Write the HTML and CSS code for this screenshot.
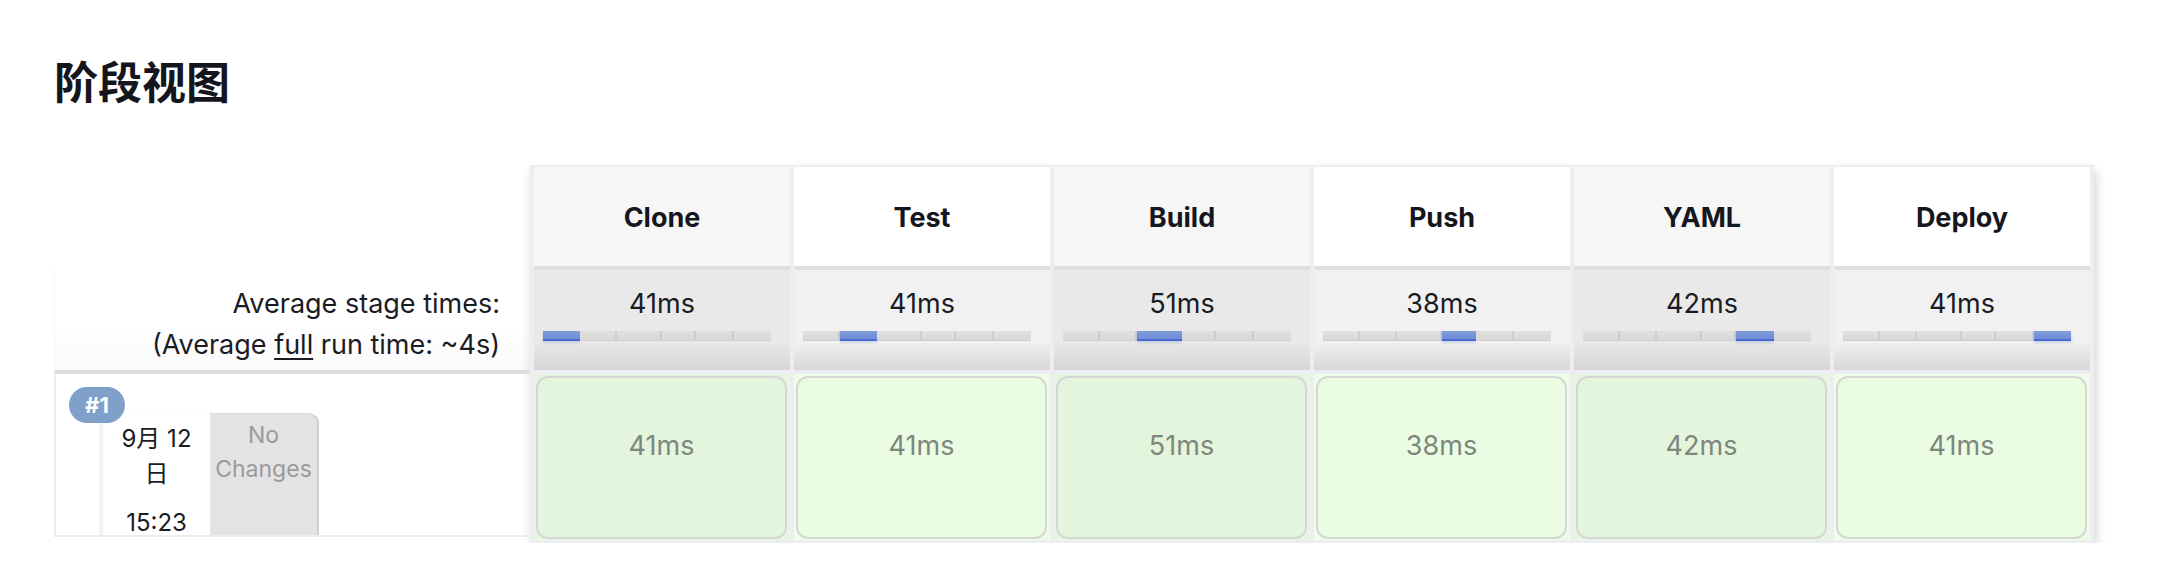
FILE: index.html
```html
<!DOCTYPE html>
<html lang="zh-CN">
<head>
<meta charset="utf-8">
<title>阶段视图</title>
<link rel="stylesheet" href="styles.css">
</head>
<body>
<main class="page">
  <h1 class="title">阶段视图</h1>
  <div class="stage-view">
    <div class="legend">
      <div class="legend-spacer"></div>
      <div class="legend-avg">
        <div>Average stage times:</div>
        <div>(Average <u>full</u> run time: ~4s)</div>
      </div>
      <div class="build-row">
        <span class="badge">#1</span>
        <div class="build-info">
          <div class="date-cell">
            <div class="date">9月 12 日</div>
            <div class="time">15:23</div>
          </div>
          <div class="changes">No Changes</div>
        </div>
      </div>
    </div>

    <div class="stages">
      <div class="stage odd">
        <div class="stage-head">Clone</div>
        <div class="stage-avg">
          <div class="avg-time">41ms</div>
          <div class="track">
            <span class="seg active" style="width:16.14%"></span><span class="seg" style="width:16.14%"></span><span class="seg" style="width:20.08%"></span><span class="seg" style="width:14.96%"></span><span class="seg" style="width:16.54%"></span><span class="seg" style="width:16.14%"></span>
          </div>
        </div>
        <div class="stage-cell"><div class="cell-box">41ms</div></div>
      </div>

      <div class="stage even">
        <div class="stage-head">Test</div>
        <div class="stage-avg">
          <div class="avg-time">41ms</div>
          <div class="track">
            <span class="seg" style="width:16.14%"></span><span class="seg active" style="width:16.14%"></span><span class="seg" style="width:20.08%"></span><span class="seg" style="width:14.96%"></span><span class="seg" style="width:16.54%"></span><span class="seg" style="width:16.14%"></span>
          </div>
        </div>
        <div class="stage-cell"><div class="cell-box">41ms</div></div>
      </div>

      <div class="stage odd">
        <div class="stage-head">Build</div>
        <div class="stage-avg">
          <div class="avg-time">51ms</div>
          <div class="track">
            <span class="seg" style="width:16.14%"></span><span class="seg" style="width:16.14%"></span><span class="seg active" style="width:20.08%"></span><span class="seg" style="width:14.96%"></span><span class="seg" style="width:16.54%"></span><span class="seg" style="width:16.14%"></span>
          </div>
        </div>
        <div class="stage-cell"><div class="cell-box">51ms</div></div>
      </div>

      <div class="stage even">
        <div class="stage-head">Push</div>
        <div class="stage-avg">
          <div class="avg-time">38ms</div>
          <div class="track">
            <span class="seg" style="width:16.14%"></span><span class="seg" style="width:16.14%"></span><span class="seg" style="width:20.08%"></span><span class="seg active" style="width:14.96%"></span><span class="seg" style="width:16.54%"></span><span class="seg" style="width:16.14%"></span>
          </div>
        </div>
        <div class="stage-cell"><div class="cell-box">38ms</div></div>
      </div>

      <div class="stage odd">
        <div class="stage-head">YAML</div>
        <div class="stage-avg">
          <div class="avg-time">42ms</div>
          <div class="track">
            <span class="seg" style="width:16.14%"></span><span class="seg" style="width:16.14%"></span><span class="seg" style="width:20.08%"></span><span class="seg" style="width:14.96%"></span><span class="seg active" style="width:16.54%"></span><span class="seg" style="width:16.14%"></span>
          </div>
        </div>
        <div class="stage-cell"><div class="cell-box">42ms</div></div>
      </div>

      <div class="stage even">
        <div class="stage-head">Deploy</div>
        <div class="stage-avg">
          <div class="avg-time">41ms</div>
          <div class="track">
            <span class="seg" style="width:16.14%"></span><span class="seg" style="width:16.14%"></span><span class="seg" style="width:20.08%"></span><span class="seg" style="width:14.96%"></span><span class="seg" style="width:16.54%"></span><span class="seg active" style="width:16.14%"></span>
          </div>
        </div>
        <div class="stage-cell"><div class="cell-box">41ms</div></div>
      </div>
    </div>
  </div>
</main>
</body>
</html>
```

FILE: styles.css
```css
* { box-sizing: border-box; }

html, body {
  margin: 0;
  padding: 0;
  background: #ffffff;
}

body {
  font-family: "Inter", "Noto Sans CJK SC", sans-serif;
  color: #1b1b23;
}

.page {
  padding: 58px 0 0 54px;
}

.title {
  margin: 0 0 63px;
  font-family: "Noto Sans CJK SC", sans-serif;
  font-size: 44px;
  line-height: 44px;
  font-weight: 700;
  color: #15151d;
}

.stage-view {
  display: flex;
  align-items: flex-start;
}

/* left legend column */
.legend {
  width: 476px;
  flex: none;
}

.legend-spacer {
  height: 101px;
}

.legend-avg {
  height: 104px;
  padding: 17px 30px 0 0;
  text-align: right;
  font-size: 27px;
  line-height: 41px;
  background: linear-gradient(to bottom, #ffffff 0%, #ffffff 55%, #fafafa 100%);
  border-left: 1px solid #f8f8f8;
}

.legend-avg u {
  text-decoration-thickness: 2px;
  text-underline-offset: 4px;
}

.build-row {
  position: relative;
  height: 167px;
  border-top: 4px solid #dedede;
  border-left: 2px solid #ececec;
  border-bottom: 2px solid #ececec;
  overflow: hidden;
}

.badge {
  position: absolute;
  left: 13px;
  top: 13px;
  z-index: 2;
  width: 56px;
  height: 36px;
  border-radius: 18px;
  background: #7fa0c8;
  color: #ffffff;
  font-size: 22px;
  font-weight: 700;
  line-height: 36px;
  text-align: center;
}

.build-info {
  display: flex;
  margin: 39px 0 0 44px;
}

.date-cell {
  width: 110px;
  height: 140px;
  padding: 8px 7px 0;
  background: #ffffff;
  border-left: 3px solid #f1f1f5;
  box-shadow: -1px 0 2px rgba(0, 0, 0, 0.04);
  text-align: center;
  font-size: 24px;
  line-height: 35px;
  color: #1b1b23;
}

.date-cell .time {
  margin-top: 14px;
}

.changes {
  width: 109px;
  height: 140px;
  padding: 4px 2px 0;
  background: #e3e3e3;
  border-right: 2px solid #cdcdcd;
  border-top: 1px solid #dadada;
  border-top-right-radius: 10px;
  text-align: center;
  font-size: 23px;
  line-height: 34px;
  color: #9a9a9a;
}

/* stage table */
.stages {
  display: flex;
  gap: 4px;
  padding: 2px 4px 3px;
  background: #eeeef2;
  box-shadow: 2px 6px 10px rgba(0, 0, 0, 0.18);
}

.stage {
  width: 256px;
  display: flex;
  flex-direction: column;
}

.stage-head {
  height: 99px;
  padding-top: 2px;
  display: flex;
  align-items: center;
  justify-content: center;
  font-size: 27px;
  font-weight: 700;
  color: #16161e;
}

.stage-avg {
  height: 104px;
  padding-top: 13px;
  border-top: 4px solid #dfdfdf;
  text-align: center;
}

.avg-time {
  font-size: 27px;
  line-height: 41px;
  color: #1b1b23;
}

.track {
  display: flex;
  width: 228px;
  height: 10px;
  margin: 7px 0 0 9px;
}

.seg {
  height: 10px;
  background: linear-gradient(to bottom, #e0e0e0, #d7d7d7);
  box-shadow: inset -2px 0 0 #cecece, inset 0 -1px 0 #d0d0d0;
}

.seg:last-child {
  box-shadow: inset 0 -1px 0 #d0d0d0;
}

.seg.active {
  background: linear-gradient(to bottom, #809dd8, #6a8ad6);
  box-shadow: inset 0 -2px 0 #4a69d2, 0 2px 3px rgba(40, 70, 160, 0.18);
}

.stage-cell {
  height: 166px;
  margin-top: 4px;
  padding: 2px 3px 1px 2px;
}

.cell-box {
  height: 100%;
  padding-top: 47px;
  border: 2px solid #d6d6d6;
  border-radius: 12px;
  text-align: center;
  font-size: 27px;
  line-height: 41px;
  color: #7e877e;
}

.odd .stage-head { background: #f6f6f6; }
.even .stage-head { background: #ffffff; }

.odd .stage-avg {
  background: linear-gradient(to bottom, #e9e9e9 0%, #e9e9e9 72%, #d5d5d5 100%);
}
.even .stage-avg {
  background: linear-gradient(to bottom, #f1f1f1 0%, #f1f1f1 72%, #d8d8d8 100%);
}

.odd .stage-cell { background: #e6f6e1; }
.even .stage-cell { background: #edfde7; }
.odd .cell-box { background: #e3f5dd; }
.even .cell-box { background: #eafde3; }
```
